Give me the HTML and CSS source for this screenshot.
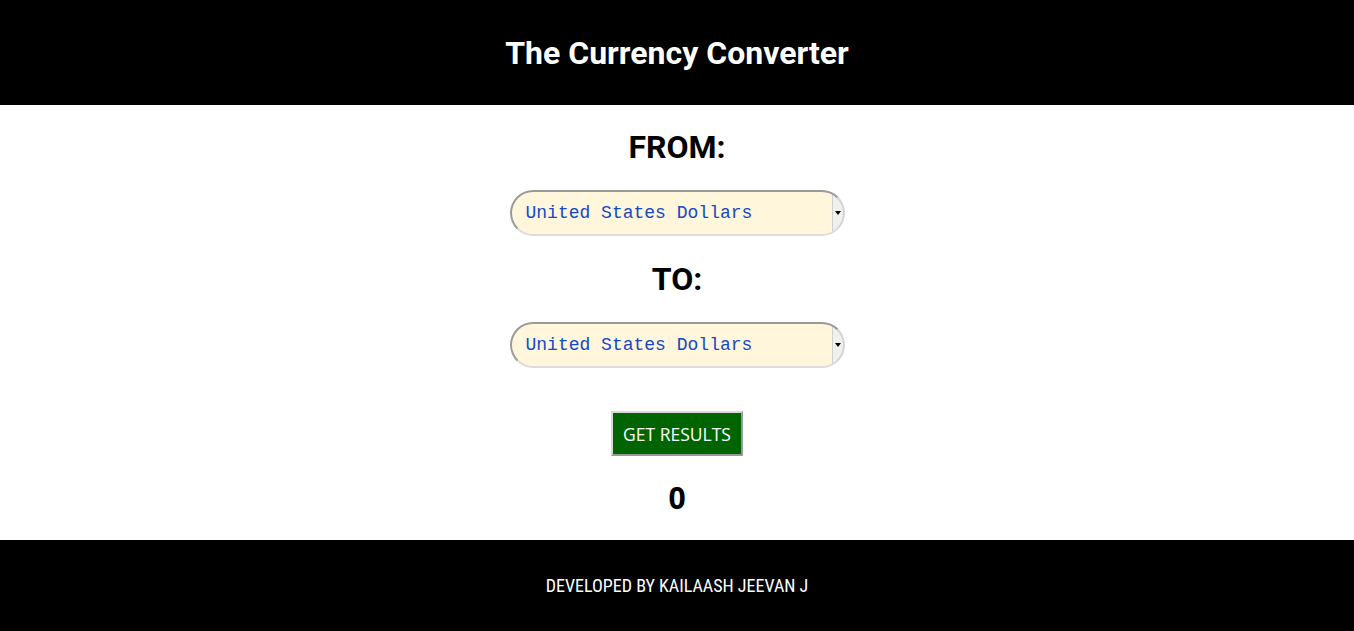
FILE: index.html
```html
<!DOCTYPE html>
<html>
<head>
<meta charset="utf-8">
<link rel="stylesheet" href="styles.css">
</head>
<body>
<header class="top"><h1 class="title">The Currency Converter</h1></header>
<main class="main">
  <h2 class="label">FROM:</h2>
  <div class="selwrap">
    <select class="sel"><option>United States Dollars</option></select>
    <span class="arrow"></span>
  </div>
  <h2 class="label">TO:</h2>
  <div class="selwrap">
    <select class="sel"><option>United States Dollars</option></select>
    <span class="arrow"></span>
  </div>
  <button class="btn">GET RESULTS</button>
  <div class="result">0</div>
</main>
<footer class="foot">DEVELOPED BY KAILAASH JEEVAN J</footer>
</body>
</html>
```
FILE: styles.css
```css
html, body { margin: 0; padding: 0; background: #fff; }
body { font-family: Roboto, "Liberation Sans", sans-serif; }
.top { background: #000; height: 105px; display: flex; align-items: center; justify-content: center; }
.title { margin: 0; color: #fff; font-size: 32px; font-weight: 700; font-family: Roboto, sans-serif; }
.main { display: flex; flex-direction: column; align-items: center; height: 435px; box-sizing: border-box; }
.label { margin: 24px 0 0; font-size: 32px; line-height: 36px; font-weight: 700; color: #000; }
.selwrap { position: relative; margin-top: 25px; width: 335px; height: 46px; }
.sel { -webkit-appearance: none; appearance: none; display: block; width: 100%; height: 100%; border-radius: 23px; border: 2px solid; border-color: #9a9a9a #d4d4d4 #dcdcdc #9a9a9a; background: linear-gradient(to right, #fff6dc 0 320px, #d0d0d0 320px 321px, #f0f0f0 321px); color: #1448c4; font-family: "Liberation Mono", monospace; font-size: 18px; padding: 0 0 0 14px; box-sizing: border-box; outline: none; }
.arrow { position: absolute; right: 4px; top: 21px; width: 0; height: 0; border-left: 3px solid transparent; border-right: 3px solid transparent; border-top: 4px solid #000; pointer-events: none; }
.selwrap + .label { margin-top: 25px; }
.btn { margin-top: 43px; width: 132px; height: 45px; background: #006400; color: #fff; border: 2px solid; border-color: #d8d8d8 #9a9a9a #9a9a9a #d8d8d8; font-family: "Open Sans", sans-serif; font-size: 17.5px; padding: 0; }
.result { margin-top: 22px; font-size: 30px; font-weight: 700; font-family: "Open Sans", sans-serif; line-height: 40px; }
.foot { background: #000; color: #fff; height: 91px; display: flex; align-items: center; justify-content: center; font-family: "Liberation Sans Narrow", "Roboto Condensed", sans-serif; font-size: 18px; }
```
